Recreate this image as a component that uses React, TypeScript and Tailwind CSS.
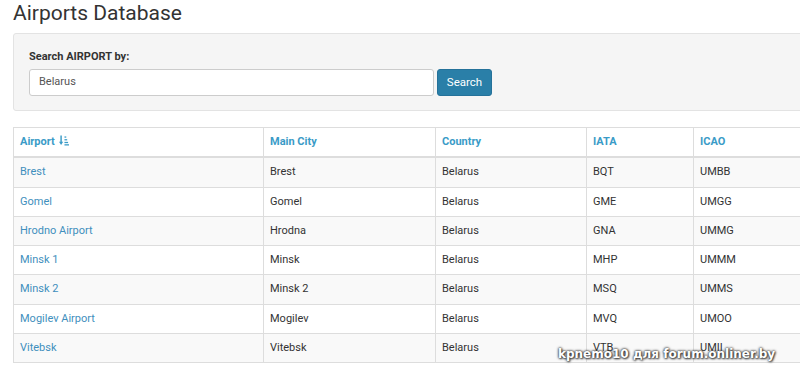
import React from "react";

const rows = [
  ["Brest", "Brest", "Belarus", "BQT", "UMBB"],
  ["Gomel", "Gomel", "Belarus", "GME", "UMGG"],
  ["Hrodno Airport", "Hrodna", "Belarus", "GNA", "UMMG"],
  ["Minsk 1", "Minsk", "Belarus", "MHP", "UMMM"],
  ["Minsk 2", "Minsk 2", "Belarus", "MSQ", "UMMS"],
  ["Mogilev Airport", "Mogilev", "Belarus", "MVQ", "UMOO"],
  ["Vitebsk", "Vitebsk", "Belarus", "VTB", "UMII"],
];

function SortIcon() {
  return (
    <svg width="10" height="11" viewBox="0 0 11 11" className="inline-block ml-[4px] -mt-[3px]" fill="#3a9bc7">
      <rect x="1.5" y="0" width="1.6" height="8" />
      <polygon points="0,7 4.6,7 2.3,10.5" />
      <rect x="6" y="1" width="2" height="1.4" />
      <rect x="6" y="4" width="3" height="1.4" />
      <rect x="6" y="7" width="4" height="1.4" />
      <rect x="6" y="9.6" width="5" height="1.4" />
    </svg>
  );
}

export default function App() {
  const headers = ["Airport", "Main City", "Country", "IATA", "ICAO"];
  const widths = ["w-[250px]", "w-[172px]", "w-[151px]", "w-[107px]", "w-[200px]"];
  return (
    <div className="relative w-[800px] h-[379px] overflow-hidden bg-white text-[#333]" style={{ fontFamily: "Roboto, 'Liberation Sans', sans-serif" }}>
      <div className="ml-[13px] w-[900px]">
        <h1 className="text-[21px] leading-[28px] font-normal text-[#333] -mt-[1px]">Airports Database</h1>
        <div className="mt-[6px] h-[78px] bg-[#f5f5f5] border border-[#e3e3e3] rounded-[3px] px-[15px] pt-[15px]">
          <div className="text-[11px] font-bold leading-[16px] text-[#333]">Search AIRPORT by:</div>
          <div className="flex mt-[4px] gap-[3px]">
            <div className="w-[405px] h-[27px] bg-white border border-[#ccc] rounded-[3px] flex items-center px-[9px] text-[11px] text-[#555]">Belarus</div>
            <div className="w-[55px] h-[27px] bg-[#2a7fa8] border border-[#25729a] rounded-[3px] flex items-center justify-center text-[11.5px] text-white">Search</div>
          </div>
        </div>
        <table className="mt-[16px] border-collapse text-[11px] leading-[16.3px]">
          <thead>
            <tr>
              {headers.map((h, i) => (
                <th key={h} className={`${widths[i]} text-left font-bold text-[#3a9bc7] border border-[#ddd] border-b-2 px-[6px] pt-[6px] pb-[6px]`}>
                  {h}
                  {i === 0 && <SortIcon />}
                </th>
              ))}
            </tr>
          </thead>
          <tbody>
            {rows.map((r, ri) => (
              <tr key={ri} className={ri % 2 === 0 ? "bg-[#f9f9f9]" : "bg-white"}>
                {r.map((c, ci) => (
                  <td key={ci} className={`border border-[#ddd] px-[6px] py-[6px] ${ci === 0 ? "text-[#3f8fbd]" : "text-[#333]"}`}>
                    {c}
                  </td>
                ))}
              </tr>
            ))}
          </tbody>
        </table>
      </div>
      <div
        className="absolute left-[558px] top-[346px] whitespace-nowrap text-[12px] font-bold text-white leading-[16px]"
        style={{ fontFamily: "'DejaVu Sans', Verdana, sans-serif", textShadow: "0 0 2px #333, 0 0 3px #333, 1px 1px 2px #555" }}
      >
        kpnemo10 для forum.onliner.by
      </div>
    </div>
  );
}
